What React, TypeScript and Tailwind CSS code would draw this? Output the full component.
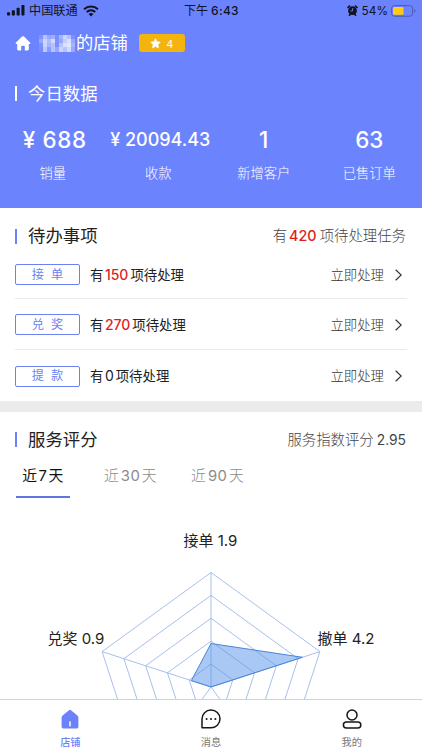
import React from "react";

const metrics = [
  { value: "¥ 688", label: "销量", size: "text-[22.4px] tracking-[.7px] pl-1" },
  { value: "¥ 20094.43", label: "收款", size: "text-[18px] pl-1" },
  { value: "1", label: "新增客户", size: "text-[22.4px]" },
  { value: "63", label: "已售订单", size: "text-[22.4px]" },
];

const todos = [
  { name: "接单", count: 150 },
  { name: "兑奖", count: 270 },
  { name: "提款", count: 0 },
];

const mosaic = [
  0.12, 0.5, 0.3, 0.35, 0.1, 0.4, 0.65, 0.5, 0.1,
  0.3, 0.65, 0.45, 0.7, 0.12, 0.3, 0.6, 0.75, 0.3,
  0.1, 0.65, 0.4, 0.5, 0.1, 0.5, 0.75, 0.8, 0.4,
  0.08, 0.55, 0.2, 0.5, 0.3, 0.65, 0.5, 0.7, 0.3,
];

const CX = 211;
const CY = 189;
const R = 114.5;

function point(i: number, ratio: number) {
  const a = -Math.PI / 2 + (i * 2 * Math.PI) / 5;
  return `${(CX + R * ratio * Math.cos(a)).toFixed(2)},${(CY + R * ratio * Math.sin(a)).toFixed(2)}`;
}

const ring = (ratio: number) => [0, 1, 2, 3, 4].map((i) => point(i, ratio)).join(" ");
const scores = [1.9, 4.2, 0, 0, 0.9];

function Title({ text, light }: { text: string; light?: boolean }) {
  return (
    <div className="flex items-center">
      <span className={`h-[15px] w-[2px] ${light ? "bg-white" : "bg-[#6b82fb]"}`} />
      <span className={`ml-[11px] text-[17.4px] leading-6 ${light ? "text-white" : "text-[#222]"}`}>{text}</span>
    </div>
  );
}

function StatusBar() {
  return (
    <div className="grid h-[21px] grid-cols-3 items-center pl-[7px] pr-[6px] text-[11.8px] text-[#11131f]">
      <div className="flex items-center">
        <svg width="18" height="11" viewBox="0 0 18 11" fill="currentColor">
          <rect x="0" y="7.3" width="3.1" height="3.2" rx=".8" />
          <rect x="4.8" y="5.2" width="3.1" height="5.3" rx=".8" />
          <rect x="9.6" y="2.8" width="3.1" height="7.7" rx=".8" />
          <rect x="14.4" y="0" width="3.1" height="10.5" rx=".8" />
        </svg>
        <span className="ml-[4px] text-[12.2px] leading-4">中国联通</span>
        <svg className="ml-[5px]" width="16" height="12" viewBox="0 0 16 12" fill="none" stroke="currentColor">
          <path d="M1.1 4.2C5 .6 11 .6 14.9 4.2" strokeWidth="2.1" />
          <path d="M3.7 7C6.2 4.8 9.8 4.8 12.3 7" strokeWidth="2" />
          <path d="M8 11.5 5.6 9C7 7.8 9 7.8 10.4 9Z" fill="currentColor" stroke="none" />
        </svg>
      </div>
      <div className="flex items-center justify-center whitespace-nowrap text-[12px] font-medium leading-4">
        <span className="font-normal">下午</span><span className="ml-[3px] tracking-[.3px]">6:43</span>
      </div>
      <div className="flex items-center justify-end">
        <svg width="11" height="11" viewBox="0 0 11 11">
          <path d="M.4 3 3 .5M10.6 3 8 .5M2 10.7l1.5-1.8M9 10.7 7.5 8.9" stroke="currentColor" strokeWidth="1.6" />
          <circle cx="5.5" cy="5.7" r="4.4" fill="currentColor" />
          <path d="M5.7 3.1v2.8H3.5" stroke="#8998ff" strokeWidth=".8" fill="none" />
        </svg>
        <span className="ml-[4px] leading-4">54%</span>
        <svg className="ml-[3px]" width="25" height="12" viewBox="0 0 25 12">
          <rect x=".6" y=".6" width="21" height="10.6" rx="2.8" fill="none" stroke="#4e5ba9" />
          <rect x="2" y="2" width="10.5" height="7.8" rx="1.2" fill="#ffcc13" />
          <path d="M23.2 4v3.8c1.6-.6 1.6-3.2 0-3.8Z" fill="#4e5ba9" />
        </svg>
      </div>
    </div>
  );
}

export default function App() {
  return (
    <div className="flex h-[750px] w-[422px] flex-col overflow-hidden bg-white font-['Inter','Noto_Sans_CJK_SC',sans-serif]">
      <header className="h-[208px] shrink-0 bg-[#6c83fe] text-white">
        <StatusBar />
        <div className="flex h-[44px] items-center pl-[15px]">
          <svg width="16" height="15" viewBox="0 0 16 15" fill="white">
            <path d="M7 .6a1.5 1.5 0 0 1 2 0l6 5.8c.8.8.5 1.5-.5 1.5h-.7v5.4c0 .7-.5 1.2-1.2 1.2H9.8v-3.7c0-.6-.4-1-1-1H7.2c-.6 0-1 .4-1 1v3.7H3.4c-.7 0-1.2-.5-1.2-1.2V7.9h-.7c-1 0-1.3-.7-.5-1.5Z" />
          </svg>
          <div className="ml-[8px] grid h-[17px] w-[36px] grid-cols-9 blur-[.5px]">
            {mosaic.map((o, i) => (
              <span key={i} className="bg-white" style={{ opacity: o }} />
            ))}
          </div>
          <span className="ml-[1px] text-[17.3px] leading-6">的店铺</span>
          <div className="ml-[11px] flex h-[18px] w-[46px] items-center justify-center rounded-[3px] bg-[#f4b40e]">
            <svg width="11" height="11" viewBox="0 0 24 24" fill="white" stroke="white" strokeWidth="1.5" strokeLinejoin="round">
              <path d="m12 1.5 3.2 6.7 7.3 1-5.3 5.1 1.3 7.4L12 18.2l-6.5 3.5 1.3-7.4L1.5 9.2l7.3-1Z" />
            </svg>
            <span className="ml-[5px] pt-px text-[11px] leading-4">4</span>
          </div>
        </div>
        <div className="flex h-[56px] items-center pl-[15px] pt-px">
          <Title text="今日数据" light />
        </div>
        <div className="grid grid-cols-4">
          {metrics.map((m) => (
            <div key={m.label} className="flex flex-col items-center">
              <span className={`h-[38px] whitespace-nowrap font-medium leading-[38px] ${m.size}`}>{m.value}</span>
              <span className="mt-[2px] text-[13.3px] font-light leading-6">{m.label}</span>
            </div>
          ))}
        </div>
      </header>

      <section className="h-[193px] shrink-0 px-[15px] pt-[3px]">
        <div className="flex h-[49px] items-center justify-between pt-px">
          <Title text="待办事项" />
          <div className="flex items-center pr-[1px] text-[14.4px] font-light leading-6 text-[#444]">
            有<span className="ml-[2px] mr-[3px] text-[14.4px] font-medium text-[#e01e1e]">420</span>项待处理任务
          </div>
        </div>
        {todos.map((t, i) => (
          <div
            key={t.name}
            className={`flex items-center ${i === 0 ? "h-[39px] pb-[9px]" : "h-[51px] pt-px"} ${i < 2 ? "border-b border-[#e9e9e9]" : ""}`}
          >
            <div className="flex h-[21px] w-[65px] shrink-0 items-center justify-center gap-[7px] rounded-[2px] border border-[#6b82f0] text-[12.2px] leading-4 text-[#6b82f5]">
              <span>{t.name[0]}</span>
              <span>{t.name[1]}</span>
            </div>
            <div className="ml-[10px] flex items-center text-[13.4px] leading-6 text-[#222]">
              有
              <span className={`ml-[1.5px] mr-[2px] text-[14px] ${t.count ? "font-medium text-[#e01e1e]" : ""}`}>{t.count}</span>
              项待处理
            </div>
            <span className="ml-auto text-[13.4px] font-light leading-6 text-[#333]">立即处理</span>
            <svg className="ml-[11px] mr-[5px]" width="7" height="12" viewBox="0 0 7 12" fill="none" stroke="#333" strokeWidth="1.2">
              <path d="m.7.7 5.5 5.3L.7 11.3" />
            </svg>
          </div>
        ))}
      </section>

      <div className="h-[11px] shrink-0 bg-[#ebebeb]" />

      <section className="flex h-[287px] shrink-0 flex-col">
        <div className="flex h-[55px] items-center justify-between px-[15px]">
          <Title text="服务评分" />
          <span className="pr-[1px] text-[14.4px] font-light leading-6 text-[#444]">
            服务指数评分<span className="ml-[3px] text-[13.8px] font-normal">2.95</span>
          </span>
        </div>
        <div className="flex h-[31px] shrink-0 pl-[16px] text-[14.8px] leading-[18px] tracking-[.5px] text-[#8b8b8b]">
          <div className="flex w-[54px] justify-center border-b-2 border-[#5f76e4] text-[#111]">
            近<span className="mx-[1px]">7</span>天
          </div>
          <div className="ml-[34px] font-light">近<span className="mx-[1.5px] font-normal">30</span>天</div>
          <div className="ml-[34px] font-light">近<span className="mx-[1.5px] font-normal">90</span>天</div>
        </div>
        <svg className="block shrink-0" width="422" height="201" viewBox="0 0 422 201">
          <g fill="none" stroke="#9eb8eb" strokeWidth=".9">
            {[0.2, 0.4, 0.6, 0.8, 1].map((r) => (
              <polygon key={r} points={ring(r)} />
            ))}
            {[0, 1, 2, 3, 4].map((i) => (
              <polyline key={i} points={`${CX},${CY} ${point(i, 1)}`} />
            ))}
          </g>
          <polygon
            points={scores.map((s, i) => point(i, s / 5)).join(" ")}
            fill="#5b96e8"
            fillOpacity=".52"
            stroke="#4a86da"
            strokeWidth="1"
          />
          <g fill="#222" fontSize="15">
            <text x="183.5" y="48">接单 1.9</text>
            <text x="47.5" y="146">兑奖 0.9</text>
            <text x="317.5" y="146">撤单 4.2</text>
          </g>
        </svg>
      </section>

      <nav className="grid h-[51px] shrink-0 grid-cols-3 border-t border-[#d2d2d2] bg-white text-[10.2px] leading-4 text-[#777]">
        <div className="flex flex-col items-center pt-[9px] text-[#6b82fb]">
          <svg width="20" height="21" viewBox="0 0 20 21">
            <path d="M9 1.2q1-.7 2 0l6.4 5.2q1 .8 1 2v9.4q0 1.8-1.8 1.8H3.4q-1.8 0-1.8-1.8V8.4q0-1.2 1-2Z" fill="currentColor" />
            <path d="M10 13v3.7" stroke="white" strokeWidth="1.5" strokeLinecap="round" />
          </svg>
          <span className="mt-[4px] font-medium">店铺</span>
        </div>
        <div className="flex flex-col items-center pt-[9px]">
          <svg width="20" height="21" viewBox="0 0 20 21" fill="none" stroke="#171717" strokeWidth="1.5">
            <path d="M1 18.8V10A9 8.9 0 1 1 10 18.8H1.6Z" strokeLinejoin="round" />
            <g fill="#171717" stroke="none">
              <circle cx="5.6" cy="10" r="1" />
              <circle cx="10" cy="10" r="1" />
              <circle cx="14.4" cy="10" r="1" />
            </g>
          </svg>
          <span className="mt-[4px]">消息</span>
        </div>
        <div className="flex flex-col items-center pt-[9px]">
          <svg width="20" height="21" viewBox="0 0 20 21" fill="none" stroke="#171717" strokeWidth="1.5">
            <circle cx="10" cy="6" r="5" />
            <rect x="1.4" y="12.9" width="17.4" height="6" rx="3" />
          </svg>
          <span className="mt-[4px]">我的</span>
        </div>
      </nav>
    </div>
  );
}
